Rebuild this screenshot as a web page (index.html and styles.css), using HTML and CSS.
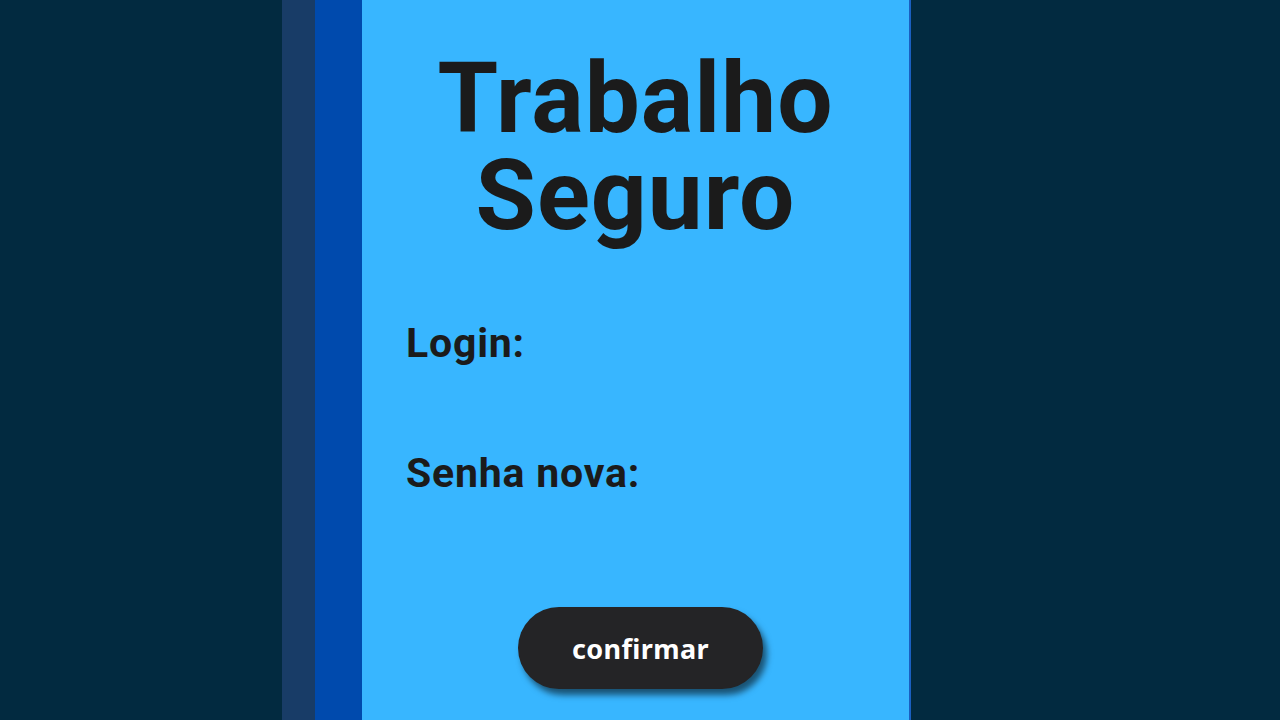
FILE: index.html
```html
<!DOCTYPE html>
<html lang="pt">
<head>
<meta charset="utf-8">
<title>Trabalho Seguro</title>
<link rel="stylesheet" href="styles.css">
</head>
<body>
<div class="page">
  <div class="gutter"></div>
  <div class="stripe stripe-dark"></div>
  <div class="stripe stripe-blue"></div>
  <main class="panel">
    <h1 class="title">Trabalho<br>Seguro</h1>
    <form class="form">
      <label class="field-label">Login:</label>
      <label class="field-label">Senha nova:</label>
      <div class="actions">
        <button type="button" class="btn">confirmar</button>
      </div>
    </form>
  </main>
</div>
</body>
</html>
```
FILE: styles.css
```css
html, body {
  margin: 0;
  padding: 0;
  height: 100%;
}
body {
  background: #022a40;
  font-family: Roboto, "Noto Sans", sans-serif;
  color: #1b1b1b;
}
.page {
  display: flex;
  height: 720px;
  overflow: hidden;
}
.gutter {
  width: 282px;
  flex: none;
}
.stripe {
  flex: none;
}
.stripe-dark {
  width: 33px;
  background: #183c67;
}
.stripe-blue {
  width: 47px;
  background: #004aad;
}
.panel {
  width: 547px;
  flex: none;
  background: #38b6ff;
  border-right: 2px solid #1a5fc0;
  display: flex;
  flex-direction: column;
  padding-top: 50px;
  box-sizing: content-box;
}
.title {
  margin: 0;
  text-align: center;
  font-size: 98px;
  line-height: 97px;
  font-weight: 700;
  letter-spacing: 1px;
}
.form {
  display: flex;
  flex-direction: column;
  padding: 0 44px;
  margin-top: 74px;
}
.field-label {
  font-size: 41px;
  font-weight: 700;
  line-height: 50px;
  height: 130px;
  letter-spacing: 0.8px;
}
.actions {
  display: flex;
  justify-content: center;
  margin-top: 29px;
  padding-left: 10px;
}
.btn {
  width: 245px;
  height: 82px;
  border: none;
  border-radius: 41px;
  background: #242426;
  color: #ffffff;
  font-family: "Noto Sans", Roboto, sans-serif;
  font-size: 27px;
  font-weight: 700;
  letter-spacing: 0.4px;
  box-shadow: 4px 6px 6px rgba(0, 0, 0, 0.55);
}
```
